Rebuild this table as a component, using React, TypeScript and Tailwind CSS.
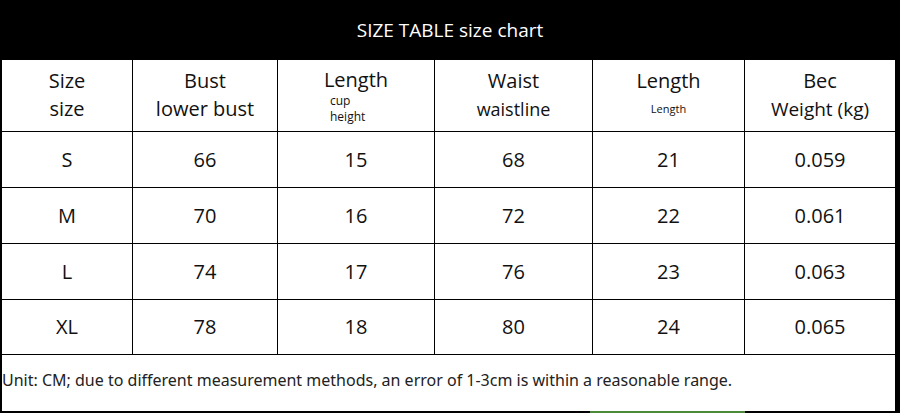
const rows = [
  ['S', '66', '15', '68', '21', '0.059'],
  ['M', '70', '16', '72', '22', '0.061'],
  ['L', '74', '17', '76', '23', '0.063'],
  ['XL', '78', '18', '80', '24', '0.065'],
];

const cols = 'grid grid-cols-[130px_145px_157px_158px_152px_151px]';

export default function App() {
  return (
    <div className="w-[900px] h-[413px] bg-white text-[#111] font-['Open_Sans',sans-serif] overflow-hidden">
      {/* Title bar */}
      <div className="h-[60px] bg-black flex items-center justify-center text-white text-[19px] pt-[1px]">
        SIZE TABLE size chart
      </div>

      <div className="border-l-2 border-r-[5px] border-b-2 border-black">
        {/* Header row */}
        <div className={`${cols} h-[72px] border-b border-black`}>
          <div className="flex flex-col items-center pt-[7px] text-[20px] leading-[28px]">
            <span>Size</span>
            <span>size</span>
          </div>
          <div className="border-l border-black flex flex-col items-center pt-[7px] text-[20px] leading-[28px]">
            <span>Bust</span>
            <span>lower bust</span>
          </div>
          <div className="border-l border-black flex flex-col items-center pt-[6px]">
            <span className="text-[20px] leading-[27px]">Length</span>
            <div className="flex flex-col text-[12px] leading-[16px] w-[48px] ml-[-4px]">
              <span>cup</span>
              <span>height</span>
            </div>
          </div>
          <div className="border-l border-black flex flex-col items-center pt-[7px] text-[20px] leading-[28px]">
            <span>Waist</span>
            <span className="text-[18px]">waistline</span>
          </div>
          <div className="border-l border-black flex flex-col items-center pt-[7px]">
            <span className="text-[20px] leading-[28px]">Length</span>
            <span className="text-[11px] leading-[28px]">Length</span>
          </div>
          <div className="border-l border-black flex flex-col items-center pt-[7px] text-[20px] leading-[28px]">
            <span>Bec</span>
            <span className="text-[19px]">Weight (kg)</span>
          </div>
        </div>

        {/* Data rows */}
        {rows.map((r, i) => (
          <div key={r[0]} className={`${cols} ${i === 3 ? 'h-[55px]' : 'h-[56px]'} border-b border-black`}>
            {r.map((v, j) => (
              <div
                key={j}
                className={`flex items-center justify-center text-[20px] ${j > 0 ? 'border-l border-black' : ''}`}
              >
                {v}
              </div>
            ))}
          </div>
        ))}

        {/* Footer note */}
        <div className="h-[56px] flex items-center pb-[6px] text-[16px] font-['Noto_Sans',sans-serif] text-[#222]">
          Unit: CM; due to different measurement methods, an error of 1-3cm is within a reasonable range.
        </div>
      </div>
      <div className="relative">
        <div className="absolute top-[-2px] left-[590px] w-[155px] h-[2px] bg-[#4c8a3a]" />
      </div>
    </div>
  );
}
